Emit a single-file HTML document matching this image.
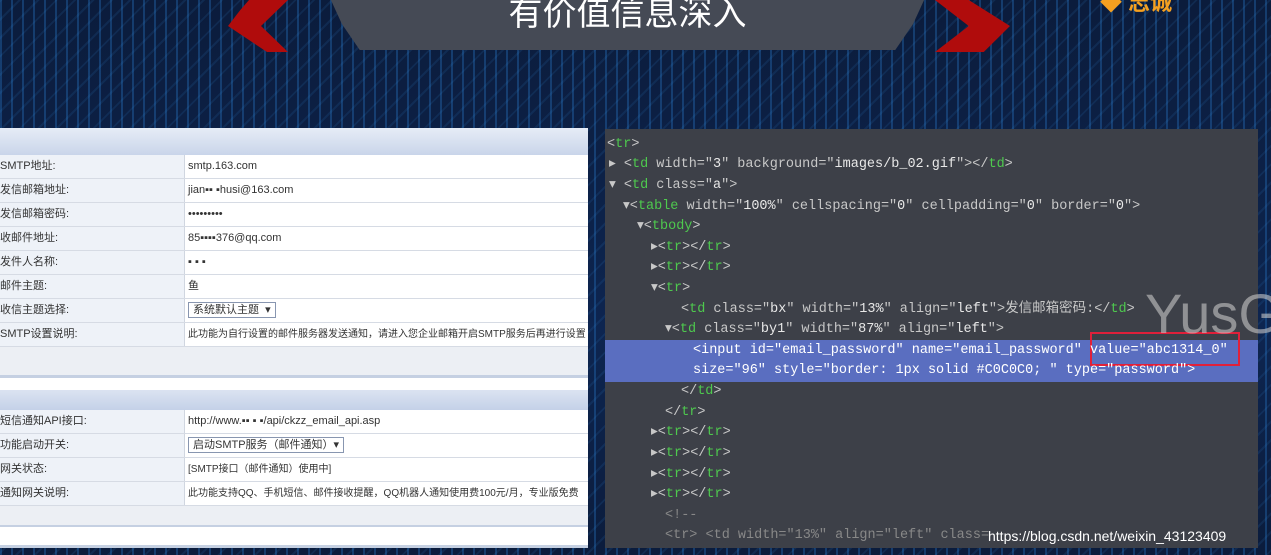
<!DOCTYPE html>
<html><head><meta charset="utf-8"><style>
body{margin:0;width:1271px;height:555px;overflow:hidden;position:relative;font-family:"Liberation Sans","Noto Sans CJK SC",sans-serif;
background:#0a1a3a;}
.bg{position:absolute;inset:0;background:
repeating-linear-gradient(90deg,rgba(40,120,200,.35) 0 2px,transparent 2px 11px),
linear-gradient(180deg,#0b1c3c,#0d2550 60%,#0b1c3c);}
.bg2{position:absolute;inset:0;background:repeating-linear-gradient(135deg,rgba(50,140,220,.12) 0 2px,transparent 2px 13px);}
.hex{position:absolute;left:330px;top:-2px;width:595px;height:52px;background:#454a55;clip-path:polygon(0 0,100% 0,98% 50%,95% 100%,5% 100%,2% 50%);color:#fff;font-size:34px;text-align:center;line-height:32px;}
.chev{position:absolute;top:0;width:60px;height:52px;background:#b00c0c;}
.l{position:absolute;left:0;top:128px;width:588px;height:420px;background:#f4f6fa;font-size:11px;color:#333;}
.row{position:absolute;left:0;width:588px;height:23px;border-bottom:1px solid #d6dbe4;background:#fff}
.row .a{position:absolute;left:0;width:184px;height:23px;background:#eef2f8;border-right:1px solid #d0d6e0;line-height:23px;}
.row .b{position:absolute;left:188px;line-height:23px;white-space:nowrap}
.band{position:absolute;left:0;width:588px}
.r{position:absolute;left:605px;top:129px;width:653px;height:419px;background:#3d4048;font-family:"Liberation Mono","Noto Sans CJK SC",monospace;font-size:13.5px;color:#c8c8c8;}
.ln{position:absolute;white-space:pre;line-height:20px}
.g{color:#4ec94e}.w{color:#e8e8e8}
.hl{position:absolute;left:0;top:211px;width:653px;height:42px;background:#5a6ec0}
</style></head><body>
<div class="bg"></div><div class="bg2"></div>
<div class="chev" style="left:228px;clip-path:polygon(35% 0,100% 0,55% 50%,100% 100%,65% 100%,0 50%,20% 20%)"></div>
<div class="chev" style="left:935px;width:75px;clip-path:polygon(0 0,45% 0,100% 50%,65% 100%,0 100%,45% 50%)"></div>
<div class="hex">有价值信息深入</div>
<div style="position:absolute;left:1100px;top:0;width:171px;height:14px;color:#f5a020;font-size:22px;line-height:6px;font-weight:bold">◆ 志诚</div>
<div class="l">
<div class="band" style="top:0;height:27px;background:linear-gradient(#e6ecf6,#c9d5ea)"></div>
<div class="row" style="top:27px"><div class="a">SMTP地址:</div><div class="b">smtp.163.com</div></div>
<div class="row" style="top:51px"><div class="a">发信邮箱地址:</div><div class="b">jian▪▪ ▪husi@163.com</div></div>
<div class="row" style="top:75px"><div class="a">发信邮箱密码:</div><div class="b">•••••••••</div></div>
<div class="row" style="top:99px"><div class="a">收邮件地址:</div><div class="b">85▪▪▪▪376@qq.com</div></div>
<div class="row" style="top:123px"><div class="a">发件人名称:</div><div class="b">▪ ▪ ▪</div></div>
<div class="row" style="top:147px"><div class="a">邮件主题:</div><div class="b">鱼</div></div>
<div class="row" style="top:171px"><div class="a">收信主题选择:</div><div class="b"><span style="border:1px solid #8896b0;padding:1px 4px">系统默认主题 &nbsp;▾</span></div></div>
<div class="row" style="top:195px"><div class="a">SMTP设置说明:</div><div class="b" style="font-size:10px">此功能为自行设置的邮件服务器发送通知，请进入您企业邮箱开启SMTP服务后再进行设置</div></div>
<div class="band" style="top:219px;height:28px;background:#eceff4;border-bottom:3px solid #c5d0e2"></div>
<div class="band" style="top:250px;height:12px;background:#fff"></div>
<div class="band" style="top:262px;height:20px;background:linear-gradient(#dbe3f1,#c4d1e8)"></div>
<div class="row" style="top:282px"><div class="a">短信通知API接口:</div><div class="b">http://www.▪▪ ▪ ▪/api/ckzz_email_api.asp</div></div>
<div class="row" style="top:306px"><div class="a">功能启动开关:</div><div class="b"><span style="border:1px solid #8896b0;padding:1px 4px">启动SMTP服务（邮件通知）▾</span></div></div>
<div class="row" style="top:330px"><div class="a">网关状态:</div><div class="b" style="font-size:10px">[SMTP接口（邮件通知）使用中]</div></div>
<div class="row" style="top:354px"><div class="a">通知网关说明:</div><div class="b" style="font-size:10px">此功能支持QQ、手机短信、邮件接收提醒，QQ机器人通知使用费100元/月，专业版免费</div></div>
<div class="band" style="top:378px;height:19px;background:#eceff4;border-bottom:2px solid #c5d0e2"></div>
<div class="band" style="top:399px;height:18px;background:#fff;border-bottom:3px solid #c5d0e2"></div>
</div>
<div class="r">
<div class="hl"></div>
<div style="position:absolute;left:485px;top:203px;width:146px;height:30px;border:2px solid #e0203a"></div>
<div class="ln" style="left:2px;top:6px">&lt;<span class="g">tr</span>&gt;</div>
<div class="ln" style="left:4px;top:26px">▸ &lt;<span class="g">td</span> width="<span class="w">3</span>" background="<span class="w">images/b_02.gif</span>"&gt;&lt;/<span class="g">td</span>&gt;</div>
<div class="ln" style="left:4px;top:47px">▾ &lt;<span class="g">td</span> class="<span class="w">a</span>"&gt;</div>
<div class="ln" style="left:18px;top:68px">▾&lt;<span class="g">table</span> width="<span class="w">100%</span>" cellspacing="<span class="w">0</span>" cellpadding="<span class="w">0</span>" border="<span class="w">0</span>"&gt;</div>
<div class="ln" style="left:32px;top:88px">▾&lt;<span class="g">tbody</span>&gt;</div>
<div class="ln" style="left:46px;top:109px">▸&lt;<span class="g">tr</span>&gt;&lt;/<span class="g">tr</span>&gt;</div>
<div class="ln" style="left:46px;top:129px">▸&lt;<span class="g">tr</span>&gt;&lt;/<span class="g">tr</span>&gt;</div>
<div class="ln" style="left:46px;top:150px">▾&lt;<span class="g">tr</span>&gt;</div>
<div class="ln" style="left:76px;top:171px">&lt;<span class="g">td</span> class="<span class="w">bx</span>" width="<span class="w">13%</span>" align="<span class="w">left</span>"&gt;发信邮箱密码:&lt;/<span class="g">td</span>&gt;</div>
<div class="ln" style="left:60px;top:191px">▾&lt;<span class="g">td</span> class="<span class="w">by1</span>" width="<span class="w">87%</span>" align="<span class="w">left</span>"&gt;</div>
<div class="ln" style="left:88px;top:212px;color:#fff">&lt;input id="email_password" name="email_password" value="abc1314_0"</div>
<div class="ln" style="left:88px;top:232px;color:#fff">size="96" style="border: 1px solid #C0C0C0; " type="password"&gt;</div>
<div class="ln" style="left:76px;top:253px">&lt;/<span class="g">td</span>&gt;</div>
<div class="ln" style="left:60px;top:274px">&lt;/<span class="g">tr</span>&gt;</div>
<div class="ln" style="left:46px;top:294px">▸&lt;<span class="g">tr</span>&gt;&lt;/<span class="g">tr</span>&gt;</div>
<div class="ln" style="left:46px;top:315px">▸&lt;<span class="g">tr</span>&gt;&lt;/<span class="g">tr</span>&gt;</div>
<div class="ln" style="left:46px;top:336px">▸&lt;<span class="g">tr</span>&gt;&lt;/<span class="g">tr</span>&gt;</div>
<div class="ln" style="left:46px;top:356px">▸&lt;<span class="g">tr</span>&gt;&lt;/<span class="g">tr</span>&gt;</div>
<div class="ln" style="left:60px;top:377px;color:#888">&lt;!--</div>
<div class="ln" style="left:60px;top:397px;color:#888">&lt;tr&gt; &lt;td width="13%" align="left" class=</div>
<div style="position:absolute;left:383px;top:397px;font-family:'Liberation Sans',sans-serif;font-size:14px;color:#fff;line-height:20px">https://blog.csdn.net/weixin_43123409</div>
<div style="position:absolute;left:540px;top:155px;font-family:'Liberation Sans',sans-serif;font-size:56px;color:rgba(200,200,200,.6);line-height:60px">YusG</div>
</div>
</body></html>
